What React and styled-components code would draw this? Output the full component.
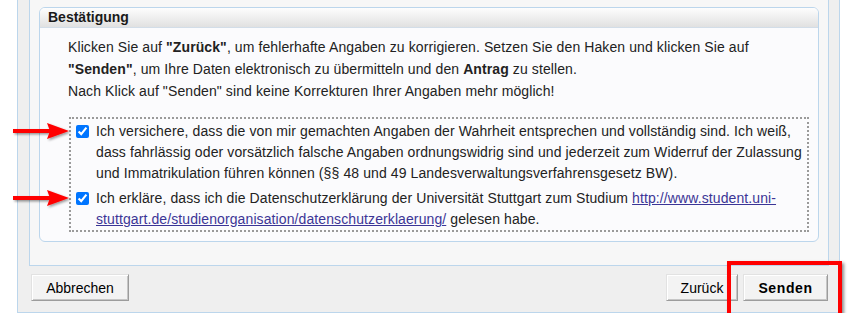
import React from "react";
import styled, { createGlobalStyle } from "styled-components";

const GlobalStyle = createGlobalStyle`
  html, body {
    margin: 0;
    padding: 0;
    background: #ffffff;
  }
  body {
    font-family: "Liberation Sans", Arial, sans-serif;
    font-size: 14px;
    letter-spacing: 0.1px;
    color: #222;
  }
`;

const Page = styled.div`
  padding-left: 17px;
`;

const OuterFrame = styled.div`
  width: 800px;
  padding: 0 10px 11px 11px;
  background: #efefef;
  border: 1px solid #bcd6ec;
  border-top: none;
`;

const Panel = styled.div`
  background: #f7f7f7;
  border: 1px solid #bcd6ec;
  border-top: none;
  padding: 7px 9px 23px 9px;
`;

const Fieldset = styled.div`
  border: 1px solid #bcd6ec;
  border-radius: 6px;
  background: #fbfbfd;
`;

const Legend = styled.div`
  height: 19px;
  line-height: 19px;
  padding-left: 8px;
  font-weight: bold;
  letter-spacing: 0;
  color: #1a1a1a;
  border-radius: 5px 5px 0 0;
  background: linear-gradient(#fdfdfd, #e1e1e1);
  border-bottom: 1px solid #d2dde8;
`;

const Intro = styled.p`
  margin: 8px 9px 0 28px;
  line-height: 22px;
  color: #222;
`;

const ConfirmBox = styled.div`
  margin: 15px 9px 9px 29px;
  padding: 2px 4px 0 5px;
  border: 2px dotted #9a9a9a;
`;

const CheckRow = styled.label`
  position: relative;
  display: flex;
  align-items: flex-start;
  gap: 7px;
  line-height: 21px;
  & + & {
    margin-top: 4px;
  }
`;

const Check = styled.input`
  flex: none;
  width: 13px;
  height: 13px;
  margin: 4px 0 0 0;
`;

const Arrow = styled.svg`
  position: absolute;
  left: -64px;
  top: 1px;
  overflow: visible;
`;

const Link = styled.a`
  color: #3b3596;
  text-decoration: underline;
`;

const ButtonBar = styled.div`
  display: flex;
  align-items: center;
  margin-top: 8px;
  padding: 0 1px 0 2px;
`;

const Spacer = styled.div`
  flex: 1;
`;

const Button = styled.button`
  height: 27px;
  width: ${(p) => p.$w}px;
  padding: 0;
  font-family: "Liberation Sans", Arial, sans-serif;
  font-size: 14px;
  font-weight: ${(p) => (p.$bold ? "bold" : "normal")};
  letter-spacing: ${(p) => (p.$bold ? "0.6px" : "0")};
  color: #000;
  background: #f3f3f3;
  border: 1px solid;
  border-color: #e2e2e2 #9c9c9c #9c9c9c #e2e2e2;
  box-shadow: inset 1px 1px #ffffff, inset -1px -1px #c6c6c6;
  border-radius: 0;
  & + & {
    margin-left: 5px;
  }
`;

const Highlight = styled.div`
  position: relative;
  margin-left: 5px;
`;

const RedFrame = styled.div`
  position: absolute;
  left: -16px;
  top: -13px;
  width: 107px;
  height: 48px;
  border: 4px solid #ff0000;
  box-shadow: 2px 2px 3px rgba(0, 0, 0, 0.45);
  pointer-events: none;
`;

const RedArrow = () => (
  <Arrow width="60" height="20" viewBox="0 0 60 20">
    <defs>
      <filter id="ash" x="-10%" y="-30%" width="130%" height="170%">
        <feDropShadow dx="1.5" dy="1.5" stdDeviation="1" floodColor="#000" floodOpacity="0.4" />
      </filter>
    </defs>
    <g filter="url(#ash)">
      <rect x="1" y="7" width="38" height="4" fill="#ff0000" />
      <polygon points="35,1 57,9 35,17 38,9" fill="#ff0000" />
    </g>
  </Arrow>
);

export default function App() {
  return (
    <Page>
      <GlobalStyle />
      <OuterFrame>
        <Panel>
          <Fieldset>
            <Legend>Bestätigung</Legend>
            <Intro>
              Klicken Sie auf <b>"Zurück"</b>, um fehlerhafte Angaben zu korrigieren. Setzen Sie den Haken und klicken Sie auf{" "}
              <b>"Senden"</b>, um Ihre Daten elektronisch zu übermitteln und den <b>Antrag</b> zu stellen.
              <br />
              Nach Klick auf "Senden" sind keine Korrekturen Ihrer Angaben mehr möglich!
            </Intro>
            <ConfirmBox>
              <CheckRow>
                <RedArrow />
                <Check type="checkbox" defaultChecked />
                <span>
                  Ich versichere, dass die von mir gemachten Angaben der Wahrheit entsprechen und vollständig sind. Ich weiß,
                  dass fahrlässig oder vorsätzlich falsche Angaben ordnungswidrig sind und jederzeit zum Widerruf der Zulassung
                  und Immatrikulation führen können (§§ 48 und 49 Landesverwaltungsverfahrensgesetz BW).
                </span>
              </CheckRow>
              <CheckRow>
                <RedArrow />
                <Check type="checkbox" defaultChecked />
                <span>
                  Ich erkläre, dass ich die Datenschutzerklärung der Universität Stuttgart zum Studium{" "}
                  <Link href="#">http://www.student.uni-stuttgart.de/studienorganisation/datenschutzerklaerung/</Link> gelesen habe.
                </span>
              </CheckRow>
            </ConfirmBox>
          </Fieldset>
        </Panel>
        <ButtonBar>
          <Button $w={98}>Abbrechen</Button>
          <Spacer />
          <Button $w={72}>Zurück</Button>
          <Highlight>
            <Button $w={85} $bold>Senden</Button>
            <RedFrame />
          </Highlight>
        </ButtonBar>
      </OuterFrame>
    </Page>
  );
}
